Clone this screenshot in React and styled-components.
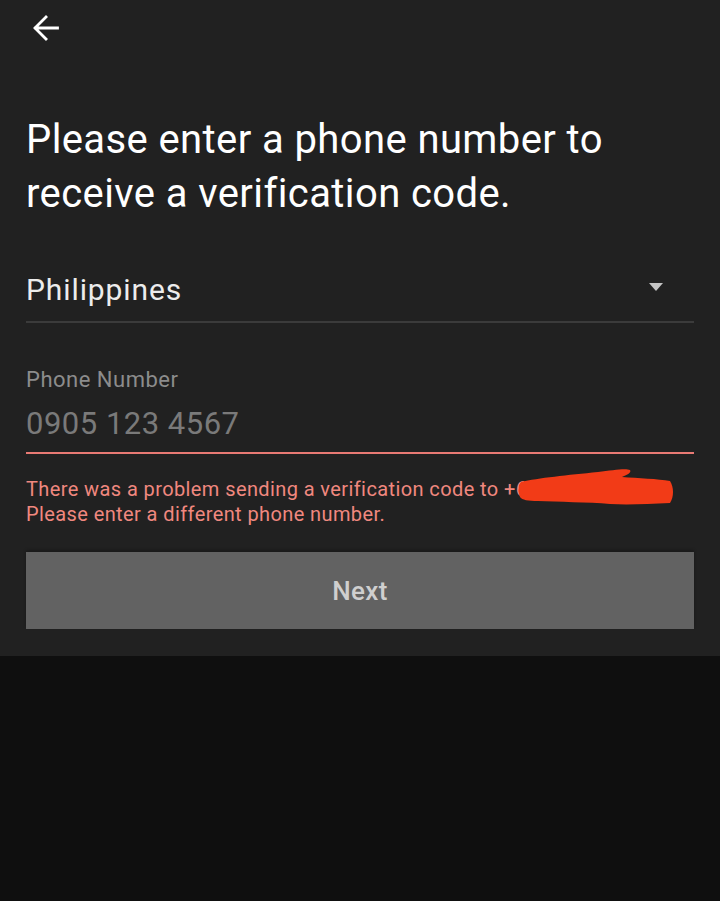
import React from 'react';
import styled, { createGlobalStyle } from 'styled-components';

const GlobalStyle = createGlobalStyle`
  html, body {
    margin: 0;
    padding: 0;
    background: #0f0f0f;
  }
  body {
    font-family: Roboto, "Noto Sans", "Liberation Sans", sans-serif;
  }
`;

const App = () => {
  return (
    <>
      <GlobalStyle />
      <Screen>
        <Panel>
          <TopBar>
            <BackButton aria-label="Back">
              <svg width="26" height="26" viewBox="0 0 26 26" fill="none">
                <path
                  d="M24.5 13H2.5M13 2 L2 13 L13 24"
                  stroke="#ffffff"
                  strokeWidth="2.8"
                  strokeLinecap="square"
                />
              </svg>
            </BackButton>
          </TopBar>
          <Title>
            Please enter a phone number to
            <br />
            receive a verification code.
          </Title>
          <CountrySelect>
            <CountryName>Philippines</CountryName>
            <Caret />
          </CountrySelect>
          <PhoneField>
            <FieldLabel>Phone Number</FieldLabel>
            <PhoneInput placeholder="0905 123 4567" />
          </PhoneField>
          <ErrorText>
            There was a problem sending a verification code to +6
            <Redacted>
              <svg width="156" height="40" viewBox="0 0 156 40">
                <path
                  d="M3 15 C20 11 50 8 80 5 C95 3 108 1 112 3 C114 6 108 8 104 10 C120 11 140 12 152 14 C156 20 156 30 152 36 C130 37 110 38 92 37 C70 35 40 35 20 34 C10 34 4 33 2 30 C0 25 0 19 3 15 Z"
                  fill="#f23b17"
                />
              </svg>
            </Redacted>
            <br />
            Please enter a different phone number.
          </ErrorText>
          <NextButton disabled>Next</NextButton>
        </Panel>
      </Screen>
    </>
  );
};

export default App;

const Screen = styled.div`
  width: 720px;
  height: 901px;
  background: #0f0f0f;
  overflow: hidden;
`;

const Panel = styled.div`
  background: #212121;
  padding: 0 26px 27px;
  display: flex;
  flex-direction: column;
`;

const TopBar = styled.div`
  height: 56px;
  padding: 15px 0 0 7px;
  box-sizing: border-box;
  display: flex;
  align-items: flex-start;
`;

const BackButton = styled.button`
  width: 26px;
  height: 26px;
  padding: 0;
  border: none;
  background: none;
  display: flex;
  cursor: pointer;
`;

const Title = styled.h1`
  margin: 57px 0 0;
  color: #ffffff;
  font-size: 40px;
  font-weight: 400;
  line-height: 54px;
  letter-spacing: 0.4px;
`;

const CountrySelect = styled.div`
  margin-top: 51px;
  padding-bottom: 13px;
  display: flex;
  align-items: center;
  justify-content: space-between;
  border-bottom: 2px solid #3b3b3b;
`;

const CountryName = styled.span`
  color: #ececec;
  font-size: 30px;
  line-height: 36px;
  letter-spacing: 0.9px;
`;

const Caret = styled.span`
  width: 0;
  height: 0;
  margin: -6px 31px 0 0;
  border-left: 7.5px solid transparent;
  border-right: 7.5px solid transparent;
  border-top: 8px solid #c4c4c4;
`;

const PhoneField = styled.div`
  margin-top: 43px;
  display: flex;
  flex-direction: column;
  border-bottom: 2px solid #e97a74;
`;

const FieldLabel = styled.label`
  color: #8c8c8c;
  font-size: 22px;
  line-height: 28px;
  letter-spacing: 0.5px;
`;

const PhoneInput = styled.input`
  margin: 10px 0 8px;
  height: 40px;
  line-height: 40px;
  padding: 0;
  border: none;
  outline: none;
  background: transparent;
  color: #ffffff;
  font-family: inherit;
  font-size: 31px;
  letter-spacing: 0.5px;

  &::placeholder {
    color: #7a7a7a;
  }
`;

const ErrorText = styled.p`
  position: relative;
  margin: 23px 0 0;
  color: #f0887f;
  font-size: 20px;
  line-height: 24.5px;
  letter-spacing: 0.4px;
`;

const Redacted = styled.span`
  position: absolute;
  left: 492px;
  top: -10px;
  line-height: 0;
`;

const NextButton = styled.button`
  margin-top: 26px;
  height: 77px;
  border: none;
  background: #626262;
  box-shadow: 0 -2px 3px rgba(0, 0, 0, 0.25);
  color: #cfcfcf;
  font-family: inherit;
  font-size: 26px;
  font-weight: 500;
  letter-spacing: 0.3px;
  cursor: default;
`;
